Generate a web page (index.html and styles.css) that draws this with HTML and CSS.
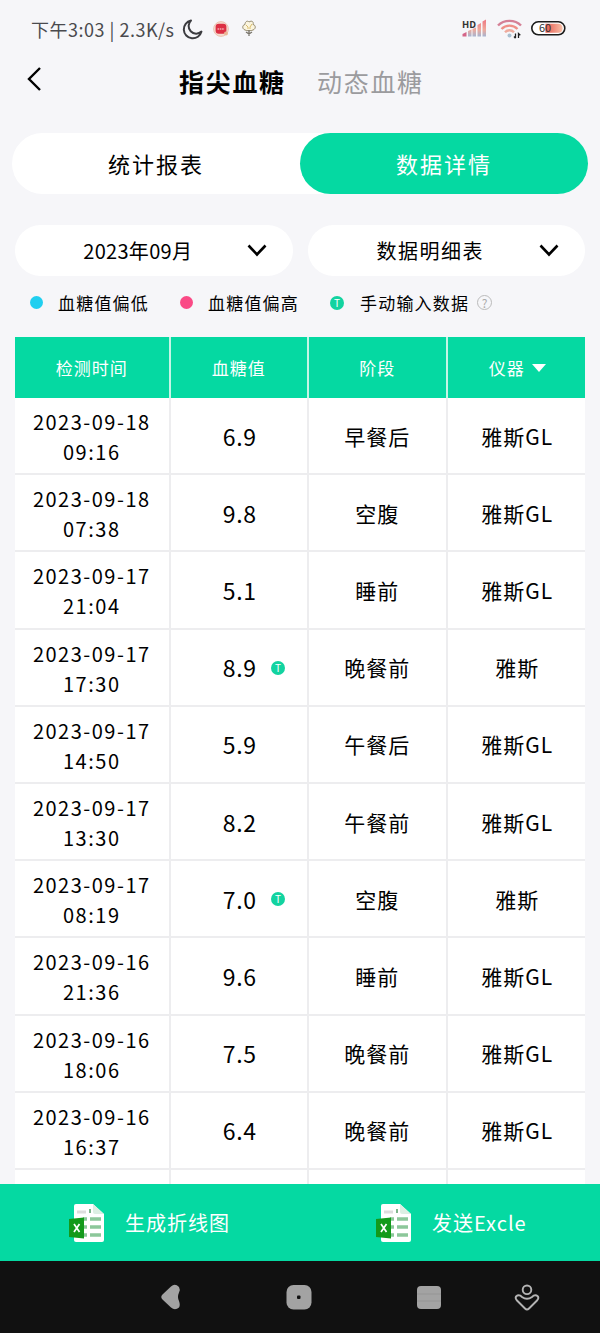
FILE: index.html
```
<!DOCTYPE html>
<html lang="zh-CN">

<head>
    <meta charset="UTF-8">
    <meta name="viewport" content="width=device-width, initial-scale=1.0">
    <title>指尖血糖</title>
    <link rel="stylesheet" href="styles.css">
</head>

<body>
    <div class="wrap">
        <div class="status">
            <span class="time">下午3:03 | 2.3K/s</span>
            <svg class="moon" width="20" height="20" viewBox="0 0 20 20">
                <path d="M8 1.500A9 9 0 1 0 18.500 12.600A7.500 7.500 0 0 1 8 1.500z" fill="none" stroke="#3c3c40" stroke-width="2" stroke-linejoin="round" />
            </svg>
            <svg class="app" width="16" height="16" viewBox="0 0 16 16">
                <circle cx="8" cy="8" r="7.400" fill="#f6dcd0" stroke="#e9b9a4" stroke-width=".8" />
                <rect x="2.600" y="2.800" width="10.800" height="10" rx="3" fill="#dc2f43" />
                <path d="M4.500 8h7" stroke="#f4aab0" stroke-width="1.600" stroke-dasharray="1.600 .7" />
                <circle cx="13" cy="12.500" r="2" fill="#eab796" />
            </svg>
            <svg class="app flower" width="14" height="17" viewBox="0 0 14 17">
                <path d="M3 10C0 9 0 5 3 4.500C3 1 6 .5 7 2C10 0 12 2 11 4.500C14 5 14 9 11 10C9 11 5 11 3 10z" fill="#fbf5df" stroke="#968c70" stroke-width="1" />
                <path d="M4 5l2 2M10 4L8 7M5 8h4" stroke="#d8bb68" />
                <path d="M7 10v6M4 12l3 2l3-2" stroke="#77736a" stroke-width="1.300" fill="none" />
            </svg>
            <div class="status_right">
                <svg width="25" height="19" viewBox="0 0 25 19">
                    <defs>
                        <linearGradient id="sig" x1="0" y1="0" x2="0" y2="1">
                            <stop offset="0" stop-color="#ee7782" />
                            <stop offset=".6" stop-color="#efaa9c" />
                            <stop offset="1" stop-color="#a6b5d2" />
                        </linearGradient>
                    </defs>
                    <path d="M.5 17.500V15l4-2v4.500z" fill="#d46588" />
                    <path d="M6 17.500V12l3.500-1.500v7zM10.500 17.500V10L14 8.500v9zM15.500 17.500V6L19 4v13.500zM20.500 17.500V2.500L24 .5v17z" fill="url(#sig)" />
                    <text class="hd" x="0" y="8.500">HD</text>
                </svg>
                <svg class="wifi" width="25" height="20" viewBox="0 0 25 20">
                    <g fill="none" stroke-width="2.400">
                        <path d="M1 6.500C7 .3 18 .3 24 6.500" stroke="#d58096" />
                        <path d="M4.500 10C9 5.500 16 5.500 20.500 10" stroke="#ef8f87" />
                        <path d="M8 13.200C10.500 10.500 14.500 10.500 17 13.200" stroke="#efab9d" />
                    </g>
                    <circle cx="12.500" cy="16.500" r="2" fill="#a8bfd0" />
                    <path d="M18.500 14.500v4.500M17 17.500l1.500 1.700M21.500 19v-4.500l1.800 1.700" stroke="#222" stroke-width="1.300" fill="none" />
                </svg>
                <svg width="35" height="15" viewBox="0 0 35 15">
                    <defs>
                        <linearGradient id="bat" x1="0" x2="1">
                            <stop offset="0" stop-color="#e85a50" />
                            <stop offset="1" stop-color="#f8c0a8" />
                        </linearGradient>
                    </defs>
                    <rect x=".8" y=".8" width="33" height="13" rx="6.500" fill="#fff" stroke="#1c1c1c" stroke-width="1.600" />
                    <path d="M14.500 2.800h13q4 0 4 4.500t-4 4.500h-13z" fill="url(#bat)" />
                    <text class="bat" x="8" y="11.200">60</text>
                </svg>
            </div>
        </div>

        <div class="title">
            <svg class="back" width="16" height="26" viewBox="0 0 16 26">
                <path d="M14 2L3 13L14 24" fill="none" stroke="#000" stroke-width="2.400" />
            </svg>
            <a href="javascript:;" class="active">指尖血糖</a>
            <a href="javascript:;">动态血糖</a>
        </div>

        <div class="tabs">
            <a href="javascript:;">统计报表</a>
            <a href="javascript:;" class="active">数据详情</a>
        </div>

        <div class="selects">
            <div class="select month">
                <span>2023年09月</span>
                <svg width="20" height="13" viewBox="0 0 20 13">
                    <path d="M1.500 1.500L10 10.500L18.500 1.500" fill="none" stroke="#000" stroke-width="2.600" />
                </svg>
            </div>
            <div class="select">
                <span>数据明细表</span>
                <svg width="20" height="13" viewBox="0 0 20 13">
                    <path d="M1.500 1.500L10 10.500L18.500 1.500" fill="none" stroke="#000" stroke-width="2.600" />
                </svg>
            </div>
        </div>

        <div class="legend">
            <i class="dot low"></i><span>血糖值偏低</span>
            <i class="dot high"></i><span>血糖值偏高</span>
            <i class="mark">T</i><span>手动输入数据</span>
            <i class="help">?</i>
        </div>

        <div class="table">
            <div class="row head">
                <div>检测时间</div>
                <div>血糖值</div>
                <div>阶段</div>
                <div>仪器<i class="arrow"></i></div>
            </div>
            <div id="list"></div>
        </div>

        <div class="footer">
            <a href="javascript:;">
                <svg class="excel" width="36" height="38" viewBox="0 0 36 38">
                    <path d="M7 0h17l11 10v26q0 2-2 2H7q-2 0-2-2V2q0-2 2-2z" fill="#fff" />
                    <path d="M24 0v8q0 2 2 2h9z" fill="#dcefe3" />
                    <path d="M8 8h9" stroke="#ddd" stroke-width="3" />
                    <path d="M21 5v4" stroke="#7cb58a" stroke-width="2" />
                    <path d="M21 15h11M14 15h4M21 23h11M14 23h4M21 31h11M14 31h4" stroke="#8cc79a" stroke-width="3.600" />
                    <path d="M0 15l15-1.500v21L0 33z" fill="#139a1b" />
                    <path d="M5 20l5.500 8M10.500 20L5 28" stroke="#fff" stroke-width="1.700" />
                </svg>
                <span>生成折线图</span>
            </a>
            <a href="javascript:;">
                <svg class="excel" width="36" height="38" viewBox="0 0 36 38">
                    <path d="M7 0h17l11 10v26q0 2-2 2H7q-2 0-2-2V2q0-2 2-2z" fill="#fff" />
                    <path d="M24 0v8q0 2 2 2h9z" fill="#dcefe3" />
                    <path d="M8 8h9" stroke="#ddd" stroke-width="3" />
                    <path d="M21 5v4" stroke="#7cb58a" stroke-width="2" />
                    <path d="M21 15h11M14 15h4M21 23h11M14 23h4M21 31h11M14 31h4" stroke="#8cc79a" stroke-width="3.600" />
                    <path d="M0 15l15-1.500v21L0 33z" fill="#139a1b" />
                    <path d="M5 20l5.500 8M10.500 20L5 28" stroke="#fff" stroke-width="1.700" />
                </svg>
                <span>发送Excle</span>
            </a>
        </div>

        <div class="nav">
            <svg width="20" height="26" viewBox="0 0 20 26">
                <path d="M1.500 10.500L10 2.500Q14-1 18 3Q19.500 5.500 18 8.500Q16 13 18 17Q19.500 21 18 23.500Q14 27 10 23.500L1.500 15.500Q-1 13 1.500 10.500z" fill="#a3a3a3" />
            </svg>
            <svg width="26" height="25" viewBox="0 0 26 25">
                <rect x=".5" width="25" height="24.500" rx="7" fill="#a3a3a3" />
                <rect x="11" y="10.500" width="3.500" height="3.500" rx="1" fill="#111" />
            </svg>
            <svg width="24" height="23" viewBox="0 0 24 23">
                <rect width="24" height="23" rx="4" fill="#a3a3a3" />
                <path d="M0 8h24M0 15h24" stroke="#929292" stroke-width=".8" />
            </svg>
            <svg class="user" width="26" height="27" viewBox="0 0 26 27">
                <g fill="none" stroke="#b4b4b4" stroke-width="1.900">
                    <circle cx="13" cy="5.800" r="4.300" />
                    <path d="M2 12.500Q5 10 8 13Q13 16.500 18 13Q21 10 24 12.500Q25 14.500 23 16.500L15 24.500Q13 26.500 11 24.500L3 16.500Q1 14.500 2 12.500z" />
                </g>
            </svg>
        </div>
    </div>
    <script>
        // 血糖记录
        let data = [
            { date: '2023-09-18', time: '09:16', value: '6.9', stage: '早餐后', device: '雅斯GL' },
            { date: '2023-09-18', time: '07:38', value: '9.8', stage: '空腹', device: '雅斯GL' },
            { date: '2023-09-17', time: '21:04', value: '5.1', stage: '睡前', device: '雅斯GL' },
            { date: '2023-09-17', time: '17:30', value: '8.9', stage: '晚餐前', device: '雅斯', manual: true },
            { date: '2023-09-17', time: '14:50', value: '5.9', stage: '午餐后', device: '雅斯GL' },
            { date: '2023-09-17', time: '13:30', value: '8.2', stage: '午餐前', device: '雅斯GL' },
            { date: '2023-09-17', time: '08:19', value: '7.0', stage: '空腹', device: '雅斯', manual: true },
            { date: '2023-09-16', time: '21:36', value: '9.6', stage: '睡前', device: '雅斯GL' },
            { date: '2023-09-16', time: '18:06', value: '7.5', stage: '晚餐前', device: '雅斯GL' },
            { date: '2023-09-16', time: '16:37', value: '6.4', stage: '晚餐前', device: '雅斯GL' },
            { date: '', time: '', value: '', stage: '', device: '' }
        ];

        // 渲染列表
        function render(data) {
            let str = "";
            data.forEach(item => {
                str += `<div class="row">
                <div class="date">${item.date}<br>${item.time}</div>
                <div class="value">${item.value}${item.manual ? '<i class="mark">T</i>' : ''}</div>
                <div>${item.stage}</div>
                <div>${item.device}</div>
            </div>`;
            })
            document.querySelector("#list").innerHTML = str;
        }

        render(data);
    </script>
</body>

</html>
```
FILE: styles.css
```
* {
    margin: 0;
    padding: 0;
    box-sizing: border-box;
}

body {
    font-family: "Noto Sans CJK SC", "Noto Sans", sans-serif;
    color: #000;
    background: #f6f6f9;
}

body a {
    text-decoration: none;
    color: #000;
}

i {
    font-style: normal;
}

svg {
    display: block;
    flex: none;
    overflow: visible;
}

.wrap {
    width: 600px;
    height: 1333px;
    display: flex;
    flex-direction: column;
    overflow: hidden;
}

/* 状态栏 */
.status {
    height: 56px;
    padding: 1px 34px 0 31px;
    display: flex;
    align-items: center;
    color: #4a4a4e;
}

.status .time {
    width: 152px;
    font-size: 18px;
    letter-spacing: .5px;
    white-space: nowrap;
}

.status .app {
    margin-left: 10px;
}

.status .flower {
    margin-left: 13px;
}

.status_right {
    margin-left: auto;
    display: flex;
    align-items: center;
    gap: 9px;
}

.status_right .wifi {
    margin-left: 1px;
}

.hd {
    font-size: 9.5px;
    font-weight: bold;
    fill: #333;
}

.bat {
    font-size: 11px;
    fill: #333;
}

/* 标题 */
.title {
    height: 49px;
    padding-left: 26px;
    display: flex;
    align-items: center;
    font-size: 25px;
    line-height: 36px;
    letter-spacing: 1.7px;
}

.title .back {
    margin-right: 137px;
    margin-bottom: 3px;
}

.title a {
    width: 138px;
    color: #9b9b9e;
}

.title a.active {
    font-weight: bold;
    color: #000;
}

/* 切换 */
.tabs {
    height: 61px;
    margin: 28px 12px 0;
    display: flex;
    border-radius: 31px;
    background: #fff;
    font-size: 22px;
    letter-spacing: 2px;
}

.tabs a {
    flex: 1;
    line-height: 60px;
    text-align: center;
    border-radius: 31px;
}

.tabs a.active {
    color: #fff;
    background: #05d9a2;
}

.selects {
    margin: 31px 15px 0;
    display: flex;
    gap: 15px;
}

.select {
    flex: 1;
    height: 51px;
    padding: 0 26px 0 0;
    display: flex;
    align-items: center;
    border-radius: 26px;
    background: #fff;
    font-size: 20px;
    letter-spacing: 1.5px;
}

.month {
    letter-spacing: .3px;
}

.select span {
    flex: 1;
    padding-left: 14px;
    text-align: center;
}

/* 图例 */
.legend {
    height: 61px;
    padding: 0 0 8px 30px;
    display: flex;
    align-items: center;
    font-size: 17px;
    letter-spacing: 1.2px;
}

.legend span {
    margin-right: 31px;
    white-space: nowrap;
}

.dot {
    width: 13px;
    height: 13px;
    margin-right: 15px;
    border-radius: 50%;
}

.low {
    background: #20cff0;
}

.high {
    background: #fa4a86;
}

.mark {
    width: 14px;
    height: 14px;
    line-height: 14px;
    border-radius: 50%;
    font-size: 10px;
    letter-spacing: 0;
    text-align: center;
    color: #fff;
    background: #12d3a0;
}

.legend .mark {
    margin-right: 16px;
}

.help {
    width: 15px;
    height: 15px;
    margin-left: -23px;
    line-height: 13px;
    border: 1px solid #bbb;
    border-radius: 50%;
    font-size: 12px;
    letter-spacing: 0;
    text-align: center;
    color: #aaa;
}

/* 表格 */
.table {
    flex: 1;
    min-height: 0;
    margin: 0 15px;
    overflow: hidden;
    background: #fff;
}

.row {
    height: 77.2px;
    display: grid;
    grid-template-columns: 155.5px 138.5px 138.5px 137.5px;
    font-size: 21px;
    letter-spacing: 1px;
}

.row > div {
    display: flex;
    align-items: center;
    justify-content: center;
    border-right: 2px solid #ededef;
    border-bottom: 2px solid #ededef;
}

.row > div:last-child {
    padding-left: 2px;
    border-right: none;
}

.head {
    height: 61px;
    font-size: 17px;
    color: #fff;
    background: #05d9a2;
}

.head > div {
    border-bottom: none;
    border-color: #c5f5e6;
}

.arrow {
    margin-left: 7px;
    border: 7px solid transparent;
    border-top: 8px solid #fff;
    border-bottom: none;
}

.row .date {
    display: block;
    padding-top: 9px;
    font-size: 20px;
    line-height: 30px;
    letter-spacing: 1.5px;
    text-align: center;
}

.row .value {
    position: relative;
    padding-left: 2px;
    font-size: 23px;
    letter-spacing: .7px;
}

.value .mark {
    position: absolute;
    right: 22px;
    top: 31px;
}

/* 底部按钮 */
.footer {
    height: 77px;
    display: flex;
    background: #05d9a2;
}

.footer a {
    flex: none;
    width: 307px;
    padding-left: 69px;
    display: flex;
    align-items: center;
    color: #fff;
    font-size: 20px;
    letter-spacing: 1px;
}

.footer .excel {
    margin-right: 20px;
}

.nav {
    height: 72px;
    padding-left: 161px;
    display: flex;
    align-items: center;
    gap: 105px;
    background: #111;
}

.nav .user {
    margin-left: -32px;
}
```
